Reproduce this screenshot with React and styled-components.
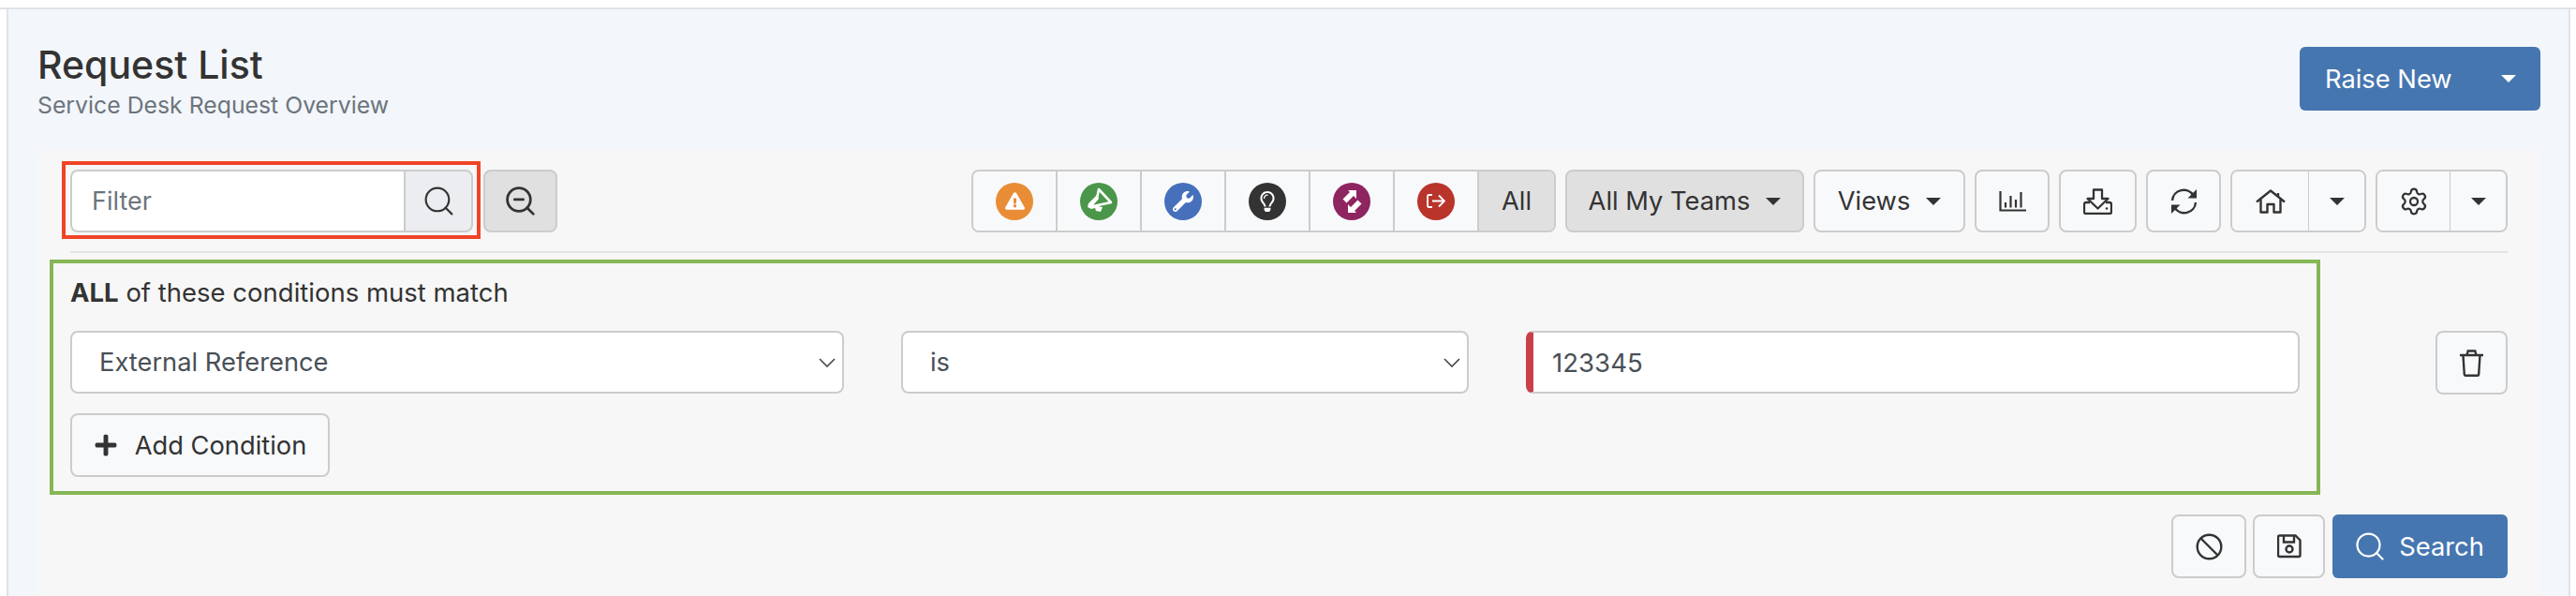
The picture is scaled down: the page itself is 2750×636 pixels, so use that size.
import React from 'react';
import styled, { createGlobalStyle } from 'styled-components';
import { Search, ZoomOut, Settings } from 'lucide-react';
import { FaExclamationTriangle, FaWrench, FaRegLightbulb, FaPlus } from 'react-icons/fa';

const Global = createGlobalStyle`
  html, body { margin: 0; padding: 0; background: #fff; overflow: hidden; }
  body { font-family: Inter, "Noto Sans", sans-serif; color: #333; }
  * { box-sizing: border-box; }
`;

const Page = styled.div`
  margin-top: 8px;
  height: 628px;
  border-top: 2px solid #dfe3e8;
  padding: 0 6px 0 7px;
  display: flex;
`;
const Panel = styled.main`
  flex: 1;
  background: #f3f6fa;
  border-left: 2px solid #dfe3e8;
  border-right: 2px solid #dfe3e8;
  padding: 40px 30px 0 31px;
  display: flex;
  flex-direction: column;
`;
const Header = styled.header`
  display: flex;
  justify-content: space-between;
  align-items: flex-start;
  height: 110px;
  flex: none;
`;
const Heading = styled.div`
  margin-top: -5px;
`;
const Title = styled.h1`
  margin: 0 0 4px;
  font-size: 41px;
  line-height: 48px;
  font-weight: 500;
  color: #333;
`;
const Subtitle = styled.div`
  font-size: 24.8px;
  line-height: 30px;
  color: #6c757d;
`;
const RaiseNew = styled.button`
  width: 257px;
  height: 68px;
  border: 0;
  border-radius: 6px;
  background: #4676b0;
  color: #fff;
  font: 400 27.3px Inter, sans-serif;
  display: flex;
  align-items: center;
  justify-content: space-between;
  padding: 0 26px 0 27px;
`;
const Caret = styled.span`
  display: inline-block;
  width: 0;
  height: 0;
  border-left: 8px solid transparent;
  border-right: 8px solid transparent;
  border-top: 8px solid ${p => p.$color || '#333'};
`;
const Card = styled.section`
  flex: 1;
  background: #f7f7f7;
  border-radius: 10px 10px 0 0;
  padding: 21px 35px 0 35px;
`;
const Toolbar = styled.div`
  display: flex;
  justify-content: space-between;
  height: 67px;
`;
const ToolbarLeft = styled.div`
  display: flex;
  gap: 11px;
`;
const ToolbarRight = styled.div`
  display: flex;
  gap: 10px;
`;
const FilterGroup = styled.div`
  position: relative;
  display: flex;
  width: 430px;
  height: 67px;
`;
const Annotation = styled.span`
  position: absolute;
  top: -9px;
  left: -9px;
  right: -8px;
  bottom: -7px;
  border: 4px solid #ef4427;
  pointer-events: none;
`;
const FilterInput = styled.input`
  flex: 1;
  min-width: 0;
  height: 67px;
  border: 2px solid #ccc;
  border-right: 0;
  border-radius: 8px 0 0 8px;
  background: #fff;
  padding: 0 0 0 21px;
  font: 400 27px Inter, sans-serif;
  color: #495057;
  &::placeholder { color: #6c757d; opacity: 1; }
`;
const Addon = styled.button`
  width: 74px;
  border: 2px solid #ccc;
  border-radius: 0 8px 8px 0;
  background: #ebedf1;
  color: #333;
  display: flex;
  align-items: center;
  justify-content: center;
  padding: 0;
`;
const Btn = styled.button`
  height: ${p => p.$h || 67}px;
  width: ${p => p.$w}px;
  flex: none;
  border: 2px solid #ccc;
  border-radius: 8px;
  background: ${p => (p.$active ? '#e0e0e0' : '#f8f9fb')};
  color: #333;
  font: 400 27.3px Inter, sans-serif;
  display: flex;
  align-items: center;
  justify-content: center;
  gap: 17px;
  padding: 0;
  svg { flex: none; }
`;
const BtnGroup = styled.div`
  display: flex;
  border: 2px solid #ccc;
  border-radius: 8px;
  overflow: hidden;
  height: 67px;
  flex: none;
`;
const GroupCell = styled.button`
  width: ${p => p.$w}px;
  height: 100%;
  border: 0;
  border-left: ${p => (p.$first ? 0 : p.$sep || 2)}px solid #ccc;
  background: ${p => (p.$active ? '#e0e0e0' : '#f8f9fb')};
  color: #333;
  font: 400 27.3px Inter, sans-serif;
  display: flex;
  align-items: center;
  justify-content: center;
  padding: 0;
`;
const Dot = styled.span`
  width: 40px;
  height: 40px;
  border-radius: 50%;
  background: ${p => p.$bg};
  color: #fff;
  display: flex;
  align-items: center;
  justify-content: center;
`;
const Rule = styled.hr`
  height: 2px;
  border: 0;
  margin: 20px 0 7px;
  background: #e0e3e6;
`;
const ConditionRow = styled.div`
  display: flex;
  align-items: flex-start;
  margin-left: -22px;
`;
const ConditionBox = styled.div`
  width: 2424px;
  height: 251px;
  flex: none;
  border: 4px solid #85b755;
  padding: 15px 18px 0;
`;
const MatchText = styled.div`
  font-size: 27.5px;
  line-height: 32px;
  height: 57px;
  color: #333;
  b { font-weight: 700; }
`;
const Fields = styled.div`
  display: grid;
  grid-template-columns: 826px 606px 826px;
  column-gap: 61px;
  height: 67px;
`;
const chevron = `url("data:image/svg+xml,%3Csvg xmlns='http://www.w3.org/2000/svg' width='18' height='10' viewBox='0 0 18 10'%3E%3Cpath d='M1 1l8 8 8-8' fill='none' stroke='%23444' stroke-width='1.6'/%3E%3C/svg%3E")`;
const Select = styled.select`
  appearance: none;
  height: 67px;
  border: 2px solid #ccc;
  border-radius: 8px;
  background: #fff ${chevron} no-repeat right 7px center;
  padding: 0 0 0 29px;
  font: 400 27.3px Inter, sans-serif;
  color: #495057;
`;
const ValueInput = styled.input`
  height: 67px;
  border: 2px solid #ccc;
  border-left: 8px solid #c9404a;
  border-radius: 8px;
  background: #fff;
  padding: 0 0 0 20px;
  font: 400 27.6px Inter, sans-serif;
  color: #495057;
`;
const AddButton = styled(Btn)`
  margin-top: 21px;
  gap: 18px;
`;
const TrashWrap = styled.div`
  margin: 76px 0 0 auto;
`;
const Actions = styled.div`
  display: flex;
  justify-content: flex-end;
  gap: 7px;
  margin-top: 21px;
`;
const SearchButton = styled.button`
  width: 187px;
  height: 68px;
  margin-left: 1px;
  border: 0;
  border-radius: 6px;
  background: #4676b0;
  color: #fff;
  font: 400 27.3px Inter, sans-serif;
  display: flex;
  align-items: center;
  justify-content: center;
  gap: 13px;
  padding: 0 3px 0 0;
`;

const BullhornIcon = () => (
  <svg width="40" height="40" viewBox="0 0 40 40" fill="#fff">
    <path d="M20 7l13 14-19 4-3-1 7-7z" fill="none" stroke="#fff" strokeWidth="2.6" strokeLinejoin="round" />
    <path d="M18 13l-9 9-1 4 4 2 4-1 1 3 5 1 2-5-10-2 6-7z" />
  </svg>
);
const ChartIcon = () => (
  <svg width="29" height="22" viewBox="0 0 29 22" fill="none" stroke="#333" strokeWidth="2.2">
    <path d="M1.500 0v20.500H29" />
    <path d="M7 12v5.500M12.500 5v12.500M18 9v8.500M23.500 1v16.500" />
  </svg>
);
const DownloadIcon = () => (
  <svg width="31" height="28" viewBox="0 0 31 28" fill="none" stroke="#333" strokeWidth="2.3" strokeLinejoin="round">
    <path d="M11 1.500h9v9.500h6.500L15.500 21.500 4.500 11H11z" />
    <path d="M7 15H3a2 2 0 0 0-2 2v8a2 2 0 0 0 2 2h25a2 2 0 0 0 2-2v-8a2 2 0 0 0-2-2h-4" />
    <circle cx="25" cy="21.500" r="1.300" fill="#333" stroke="none" />
  </svg>
);
const RefreshIcon = () => (
  <svg width="29" height="28" viewBox="0 0 29 28" fill="none" stroke="#333" strokeWidth="2.4">
    <g>
      <path d="M2 13A12.200 12.200 0 0 1 24.500 7.500" />
      <path d="M28 1v9.500H18.500z" fill="#333" stroke="none" />
    </g>
    <g transform="rotate(180 14.500 14)">
      <path d="M2 13A12.200 12.200 0 0 1 24.500 7.500" />
      <path d="M28 1v9.500H18.500z" fill="#333" stroke="none" />
    </g>
  </svg>
);
const HomeIcon = () => (
  <svg width="32" height="26" viewBox="0 0 32 26" fill="none" stroke="#333" strokeWidth="2.4" strokeLinejoin="round">
    <path d="M1 13.500L16 1.500l15 12" />
    <path d="M5.500 10.500V24.500h7V16h7v8.500h7V10.500" />
    <path d="M24 4v3.500" />
  </svg>
);
const ArrowsIcon = () => (
  <svg width="23" height="24" viewBox="0 0 23 24" fill="#fff">
    <path d="M7 0h9v9l-3-3-7.500 7.500L1.500 9.500 9 2z" />
    <path d="M7 0h9v9l-3-3-7.500 7.500L1.500 9.500 9 2z" transform="rotate(180 11.500 12)" />
  </svg>
);
const ExitIcon = () => (
  <svg width="20" height="15" viewBox="0 0 20 15" fill="none" stroke="#fff" strokeWidth="1.900">
    <path d="M6 1H2.500A1.500 1.500 0 0 0 1 2.500v10A1.500 1.500 0 0 0 2.500 14H6" />
    <path d="M6 7.500h13M13 1.500l6 6-6 6" />
  </svg>
);
const TrashIcon = () => (
  <svg width="25" height="29" viewBox="0 0 25 29" fill="none" stroke="#333" strokeWidth="2.4">
    <path d="M0 6h25M7.500 6l1.200-4.500h7.600L17.500 6M3.500 6l1.300 20.500a1.500 1.500 0 0 0 1.500 1.300h12.400a1.500 1.500 0 0 0 1.500-1.300L21.500 6" />
  </svg>
);
const BanIcon = () => (
  <svg width="29" height="29" viewBox="0 0 29 29" fill="none" stroke="#333" strokeWidth="2.4">
    <circle cx="14.500" cy="14.500" r="12.800" />
    <path d="M5.500 5.500l18 18" />
  </svg>
);
const SaveIcon = () => (
  <svg width="26" height="26" viewBox="0 0 26 26" fill="none" stroke="#333" strokeWidth="2.4">
    <path d="M2.500 1.500h17l5 5v16a1.500 1.500 0 0 1-1.500 1.500H2.500A1.500 1.500 0 0 1 1 23V3a1.500 1.500 0 0 1 1.500-1.500z" />
    <path d="M7 2v6.500h11V2" />
    <circle cx="13" cy="16" r="3.500" />
  </svg>
);

export default function App() {
  return (
    <>
      <Global />
      <Page>
        <Panel>
          <Header>
            <Heading>
              <Title>Request List</Title>
              <Subtitle>Service Desk Request Overview</Subtitle>
            </Heading>
            <RaiseNew>
              <span>Raise New</span>
              <Caret $color="#fff" />
            </RaiseNew>
          </Header>
          <Card>
            <Toolbar>
              <ToolbarLeft>
                <FilterGroup>
                  <FilterInput placeholder="Filter" />
                  <Addon><Search size={37} strokeWidth={1.4} /></Addon>
                  <Annotation />
                </FilterGroup>
                <Btn $w={79} $active><ZoomOut size={37} strokeWidth={1.8} /></Btn>
              </ToolbarLeft>
              <ToolbarRight>
                <BtnGroup>
                  <GroupCell $w={88} $first><Dot $bg="#e88d35"><FaExclamationTriangle size={21} /></Dot></GroupCell>
                  <GroupCell $w={90}><Dot $bg="#4a964a"><BullhornIcon /></Dot></GroupCell>
                  <GroupCell $w={90}><Dot $bg="#4670bc"><FaWrench size={22} /></Dot></GroupCell>
                  <GroupCell $w={90}><Dot $bg="#333"><FaRegLightbulb size={22} /></Dot></GroupCell>
                  <GroupCell $w={90}><Dot $bg="#8e2460"><ArrowsIcon /></Dot></GroupCell>
                  <GroupCell $w={90}><Dot $bg="#b9342b"><ExitIcon /></Dot></GroupCell>
                  <GroupCell $w={82} $active>All</GroupCell>
                </BtnGroup>
                <Btn $w={255} $active>All My Teams <Caret /></Btn>
                <Btn $w={162}>Views <Caret /></Btn>
                <Btn $w={80}><ChartIcon /></Btn>
                <Btn $w={83}><DownloadIcon /></Btn>
                <Btn $w={80}><RefreshIcon /></Btn>
                <BtnGroup>
                  <GroupCell $w={81} $first><HomeIcon /></GroupCell>
                  <GroupCell $w={60} $sep={1}><Caret /></GroupCell>
                </BtnGroup>
                <BtnGroup>
                  <GroupCell $w={77} $first><Settings size={32} strokeWidth={1.7} /></GroupCell>
                  <GroupCell $w={60} $sep={1}><Caret /></GroupCell>
                </BtnGroup>
              </ToolbarRight>
            </Toolbar>
            <Rule />
            <ConditionRow>
              <ConditionBox>
                <MatchText><b>ALL</b> of these conditions must match</MatchText>
                <Fields>
                  <Select defaultValue="External Reference"><option>External Reference</option></Select>
                  <Select defaultValue="is"><option>is</option></Select>
                  <ValueInput defaultValue="123345" />
                </Fields>
                <AddButton $w={277} $h={68}><FaPlus size={26} />Add Condition</AddButton>
              </ConditionBox>
              <TrashWrap><Btn $w={77} $h={68}><TrashIcon /></Btn></TrashWrap>
            </ConditionRow>
            <Actions>
              <Btn $w={80} $h={68}><BanIcon /></Btn>
              <Btn $w={77} $h={68}><SaveIcon /></Btn>
              <SearchButton><Search size={36} strokeWidth={1.5} />Search</SearchButton>
            </Actions>
          </Card>
        </Panel>
      </Page>
    </>
  );
}
